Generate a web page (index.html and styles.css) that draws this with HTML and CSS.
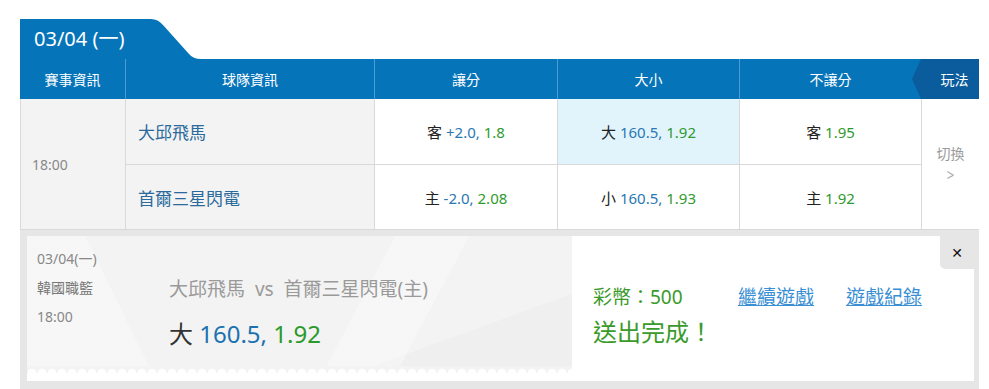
FILE: index.html
```html
<!DOCTYPE html>
<html lang="zh-Hant">
<head>
    <meta charset="UTF-8">
    <title>賽事投注</title>
    <link rel="stylesheet" href="styles.css">
</head>
<body>
    <div class="board">
        <div class="tab">03/04 (一)</div>

        <div class="grid">
            <div class="th">賽事資訊</div>
            <div class="th">球隊資訊</div>
            <div class="th">讓分</div>
            <div class="th">大小</div>
            <div class="th">不讓分</div>
            <div class="th th-mode">玩法</div>

            <div class="cell time">18:00</div>
            <div class="cell team">大邱飛馬</div>
            <div class="cell odds"><span>客 <span class="blue">+2.0,</span> <span class="green">1.8</span></span></div>
            <div class="cell odds picked"><span>大 <span class="blue">160.5,</span> <span class="green">1.92</span></span></div>
            <div class="cell odds"><span>客 <span class="green">1.95</span></span></div>
            <div class="cell switch">切換<span class="chev">&gt;</span></div>

            <div class="cell team">首爾三星閃電</div>
            <div class="cell odds"><span>主 <span class="blue">-2.0,</span> <span class="green">2.08</span></span></div>
            <div class="cell odds"><span>小 <span class="blue">160.5,</span> <span class="green">1.93</span></span></div>
            <div class="cell odds"><span>主 <span class="green">1.92</span></span></div>
        </div>

        <div class="result">
            <div class="panel">
                <div class="ticket">
                    <div class="ticket-main">
                        <div class="info">
                            <div>03/04(一)</div>
                            <div class="league">韓國職籃</div>
                            <div>18:00</div>
                        </div>
                        <div class="bet">
                            <div class="match">大邱飛馬&nbsp;&nbsp;vs&nbsp;&nbsp;首爾三星閃電(主)</div>
                            <div class="pick">大 <span class="blue">160.5,</span> <span class="green">1.92</span></div>
                        </div>
                    </div>
                    <div class="zigzag"></div>
                </div>
                <div class="status">
                    <div class="status-body">
                        <div class="status-line">
                            <span class="coins">彩幣：500</span>
                            <a href="#" class="link">繼續遊戲</a>
                            <a href="#" class="link">遊戲紀錄</a>
                        </div>
                        <div class="done">送出完成！</div>
                    </div>
                    <button type="button" class="close">&#x2715;</button>
                </div>
            </div>
        </div>
    </div>
</body>
</html>
```

FILE: styles.css
```css
body, html {
    margin: 0;
    padding: 0;
    background-color: #ffffff;
    font-family: "Noto Sans", "Noto Sans CJK TC", sans-serif;
}

.board {
    width: 959px;
    margin: 19px 0 0 20px;
}

.tab {
    width: 180px;
    height: 40px;
    box-sizing: border-box;
    padding-left: 14px;
    line-height: 39px;
    font-size: 20px;
    color: #ffffff;
    background-color: #0574b9;
    clip-path: path('M0 0 H131 Q138 0 143 6 L169 35 Q173 40 181 40 H0 Z');
}

.grid {
    display: grid;
    grid-template-columns: 105px 249px 183px 182px 182px 58px;
    grid-template-rows: 40px 65px 65px;
    border-right: 1px solid #d9d9d9;
    box-sizing: border-box;
}

.th {
    display: flex;
    align-items: center;
    justify-content: center;
    background-color: #0574b9;
    color: #ffffff;
    font-size: 14px;
    border-left: 1px solid #4d9bd0;
}

.th:first-child {
    border-left: none;
}

.th-mode {
    position: relative;
    background-color: #0a5c9c;
    border-left: none;
    padding-left: 9px;
}

.th-mode::before {
    content: "";
    position: absolute;
    left: -9px;
    top: 0;
    border-right: 9px solid #0a5c9c;
    border-top: 20px solid transparent;
    border-bottom: 20px solid transparent;
}

.cell {
    display: flex;
    align-items: center;
    border-left: 1px solid #d9d9d9;
    border-top: 1px solid #d9d9d9;
    background-color: #ffffff;
    font-size: 14px;
    color: #222;
}

.time {
    grid-row: span 2;
    background-color: #f3f3f3;
    color: #888;
    padding-left: 11px;
    border-top: none;
}

.team {
    background-color: #f3f3f3;
    color: #2a6a9c;
    font-size: 17px;
    padding-left: 12px;
}

.grid > .cell:nth-child(8),
.grid > .cell:nth-child(9),
.grid > .cell:nth-child(10),
.grid > .cell:nth-child(11),
.grid > .cell:nth-child(12) {
    border-top: none;
}

.odds {
    justify-content: center;
    font-size: 15px;
}

.picked {
    background-color: #e1f4fc;
}

.switch {
    grid-row: span 2;
    flex-direction: column;
    justify-content: center;
    color: #9a9a9a;
    font-size: 14px;
    line-height: 19px;
    border-top: none;
}

.chev {
    font-size: 13px;
    transform: scaleY(1.3);
    margin-top: 3px;
    color: #aaa;
}

.blue {
    color: #2a78b4;
}

.green {
    color: #2f9a2f;
}

.result {
    background-color: #e6e6e6;
    padding: 6px 5px 9px 7px;
    border-top: 1px solid #d9d9d9;
}

.panel {
    display: flex;
    height: 145px;
    background-color: #ffffff;
}

.ticket {
    width: 545px;
    flex-shrink: 0;
    display: flex;
    flex-direction: column;
    padding-bottom: 8px;
    box-sizing: border-box;
}

.ticket-main {
    flex: 1;
    display: flex;
    background-color: #f3f3f3;
    background-image:
        linear-gradient(118deg, transparent 0 60%, rgba(255, 255, 255, 0.3) 60% 72%, transparent 72%),
        linear-gradient(64deg, rgba(255, 255, 255, 0.3) 0 20%, transparent 20%),
        linear-gradient(160deg, transparent 0 78%, rgba(0, 0, 0, 0.015) 78%);
}

.zigzag {
    height: 7px;
    background-color: #ffffff;
    background-image: radial-gradient(circle at 50% 100%, #ffffff 4px, #f3f3f3 4.6px);
    background-size: 10px 7px;
    background-repeat: repeat-x;
}

.info {
    width: 142px;
    padding: 8px 0 0 10px;
    box-sizing: border-box;
    font-size: 14px;
    line-height: 29px;
    color: #888;
}

.info .league {
    color: #777;
}

.bet {
    padding-top: 39px;
}

.match {
    font-size: 19px;
    line-height: 28px;
    color: #9a9a9a;
    white-space: nowrap;
}

.pick {
    font-size: 24px;
    line-height: 30px;
    margin-top: 16px;
    color: #333;
    white-space: pre;
}

.pick .blue {
    color: #1b72b1;
}

.pick .green {
    color: #2a9a2a;
}

.status {
    flex: 1;
    min-width: 0;
    display: flex;
    justify-content: space-between;
    align-items: flex-start;
}

.status-body {
    flex: 1;
    min-width: 0;
    padding: 47px 0 0 21px;
}

.status-line {
    display: flex;
    align-items: center;
    gap: 32px;
    height: 26px;
    white-space: nowrap;
}

.coins {
    font-size: 19px;
    color: #3a9a2a;
    width: 113px;
    flex-shrink: 0;
}

.link {
    font-size: 19px;
    color: #3a8fd4;
    flex-shrink: 0;
}

.done {
    margin-top: 7px;
    font-size: 24px;
    line-height: 32px;
    color: #3a9a2a;
}

.close {
    width: 34px;
    height: 33px;
    flex-shrink: 0;
    border: none;
    padding: 0;
    background-color: #e6e6e6;
    border-bottom-left-radius: 5px;
    font-size: 14px;
    font-weight: bold;
    color: #111;
    cursor: pointer;
    font-family: "DejaVu Sans", sans-serif;
}
```
